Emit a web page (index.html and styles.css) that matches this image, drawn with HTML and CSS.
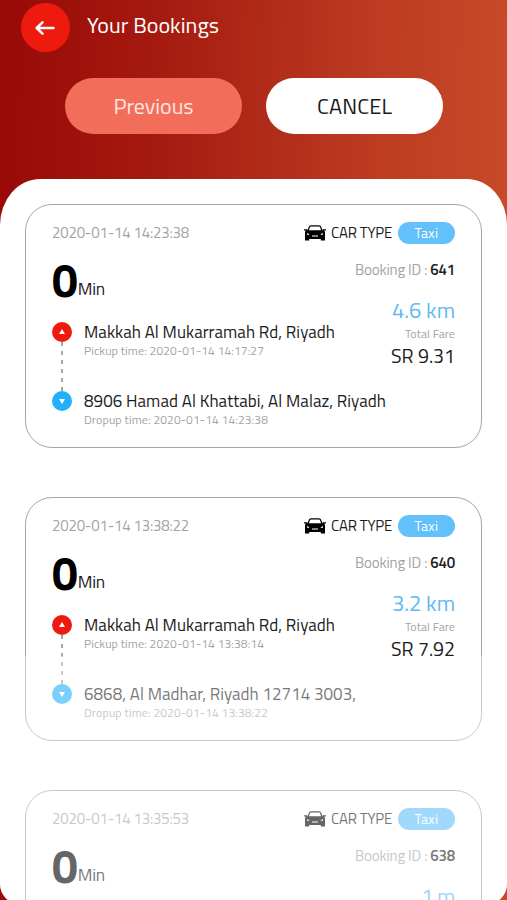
FILE: index.html
```html
<!DOCTYPE html>
<html lang="en">
<head>
    <meta charset="UTF-8">
    <meta name="viewport" content="width=device-width, initial-scale=1.0">
    <title>Your Bookings</title>
    <link rel="stylesheet" href="styles.css">
</head>
<body>
    <svg class="defs" width="0" height="0">
        <symbol id="car" viewBox="0 0 22 16">
            <path d="M4 6 L5.2 2.4 Q5.6 0.9 7.2 0.9 H14.8 Q16.4 0.9 16.8 2.4 L18 6" fill="none" stroke="currentColor" stroke-width="1.3"/>
            <path fill-rule="evenodd" d="M0 4.2 H3.4 V5.2 H18.6 V4.2 H22 V5.4 H20.2 Q21 6.2 21 7.5 V15.6 H16.8 V14 H5.2 V15.6 H1 V7.5 Q1 6.2 1.8 5.4 H0 Z M3 8 V9.6 Q4 10.2 5.6 9.6 Z M19 8 V9.6 Q18 10.2 16.4 9.6 Z M8 10.6 V11.6 H14 V10.6 Z" fill="currentColor"/>
        </symbol>
    </svg>

    <div class="screen">
        <header class="header">
            <button class="back" type="button" aria-label="Back">
                <svg width="20" height="16" viewBox="0 0 20 16" fill="none" stroke="#fff" stroke-width="2.5" stroke-linecap="round" stroke-linejoin="round">
                    <path d="M18.5 8 H2 M7.5 2.3 L1.7 8 L7.5 13.7"/>
                </svg>
            </button>
            <h1 class="title"><span class="fit" data-w="132">Your Bookings</span></h1>
        </header>

        <div class="tabs">
            <button class="tab tab-previous" type="button"><span class="fit" data-w="80">Previous</span></button>
            <button class="tab tab-cancel" type="button"><span class="fit" data-w="75">CANCEL</span></button>
        </div>

        <main class="sheet">
            <div class="card">
                <div class="card-top">
                    <span class="date fit" data-w="137">2020-01-14 14:23:38</span>
                    <svg class="car"><use href="#car"/></svg>
                    <span class="car-type fit" data-w="61">CAR TYPE</span>
                    <span class="badge"><span class="fit" data-w="24">Taxi</span></span>
                </div>
                <div class="card-body">
                    <div class="trip">
                        <div class="duration"><b>0</b><span class="fit" data-w="27">Min</span></div>
                        <div class="stop">
                            <i class="dot dot-up"></i>
                            <div>
                                <p class="place"><span class="fit" data-w="251">Makkah Al Mukarramah Rd, Riyadh</span></p>
                                <p class="time"><span class="fit" data-w="180">Pickup time: 2020-01-14 14:17:27</span></p>
                            </div>
                        </div>
                        <div class="stop">
                            <i class="dot dot-down"></i>
                            <div>
                                <p class="place"><span class="fit" data-w="302">8906 Hamad Al Khattabi, Al Malaz, Riyadh</span></p>
                                <p class="time"><span class="fit" data-w="184">Dropup time: 2020-01-14 14:23:38</span></p>
                            </div>
                        </div>
                    </div>
                    <div class="fare">
                        <p class="booking"><span class="fit" data-w="100">Booking ID : <b>641</b></span></p>
                        <p class="distance"><span class="fit" data-w="63">4.6 km</span></p>
                        <p class="fare-label"><span class="fit" data-w="50">Total Fare</span></p>
                        <p class="price"><span class="fit" data-w="64">SR 9.31</span></p>
                    </div>
                </div>
            </div>

            <div class="card">
                <div class="card-top">
                    <span class="date fit" data-w="137">2020-01-14 13:38:22</span>
                    <svg class="car"><use href="#car"/></svg>
                    <span class="car-type fit" data-w="61">CAR TYPE</span>
                    <span class="badge"><span class="fit" data-w="24">Taxi</span></span>
                </div>
                <div class="card-body">
                    <div class="trip">
                        <div class="duration"><b>0</b><span class="fit" data-w="27">Min</span></div>
                        <div class="stop">
                            <i class="dot dot-up"></i>
                            <div>
                                <p class="place"><span class="fit" data-w="251">Makkah Al Mukarramah Rd, Riyadh</span></p>
                                <p class="time"><span class="fit" data-w="180">Pickup time: 2020-01-14 13:38:14</span></p>
                            </div>
                        </div>
                        <div class="stop">
                            <i class="dot dot-down"></i>
                            <div>
                                <p class="place"><span class="fit" data-w="272">6868, Al Madhar, Riyadh 12714 3003,</span></p>
                                <p class="time"><span class="fit" data-w="184">Dropup time: 2020-01-14 13:38:22</span></p>
                            </div>
                        </div>
                    </div>
                    <div class="fare">
                        <p class="booking"><span class="fit" data-w="100">Booking ID : <b>640</b></span></p>
                        <p class="distance"><span class="fit" data-w="63">3.2 km</span></p>
                        <p class="fare-label"><span class="fit" data-w="50">Total Fare</span></p>
                        <p class="price"><span class="fit" data-w="64">SR 7.92</span></p>
                    </div>
                </div>
            </div>

            <div class="card">
                <div class="card-top">
                    <span class="date fit" data-w="137">2020-01-14 13:35:53</span>
                    <svg class="car"><use href="#car"/></svg>
                    <span class="car-type fit" data-w="61">CAR TYPE</span>
                    <span class="badge"><span class="fit" data-w="24">Taxi</span></span>
                </div>
                <div class="card-body">
                    <div class="trip">
                        <div class="duration"><b>0</b><span class="fit" data-w="27">Min</span></div>
                    </div>
                    <div class="fare">
                        <p class="booking"><span class="fit" data-w="100">Booking ID : <b>638</b></span></p>
                        <p class="distance"><span class="fit" data-w="34">1 m</span></p>
                    </div>
                </div>
            </div>
            <div class="fade"></div>
        </main>
    </div>

    <script src="script.js"></script>
</body>
</html>
```
FILE: styles.css
```css
* {
    box-sizing: border-box;
}
body {
    margin: 0;
    font-family: "Titillium Web", "Noto Sans", sans-serif;
    color: #1c1c1c;
}
p, h1 {
    margin: 0;
    font-weight: 400;
}
button {
    border: none;
    padding: 0;
    font-family: inherit;
}
.defs {
    position: absolute;
}
.fit {
    white-space: nowrap;
}
.screen {
    height: 900px;
    overflow: hidden;
    display: flex;
    flex-direction: column;
    background: linear-gradient(91deg, #990a07 1%, #a51a10 30%, #b02a19 50%, #bd3c22 73%, #c64928 97%);
}
.header {
    display: flex;
    gap: 17px;
    padding: 3px 0 0 21px;
}
.back {
    width: 49px;
    height: 49px;
    padding-right: 2px;
    border-radius: 50%;
    background: #ef1a0e;
    display: flex;
    align-items: center;
    justify-content: center;
}
.title {
    font-size: 22px;
    line-height: 45px;
    color: #fff;
}
.tabs {
    display: flex;
    gap: 24px;
    padding: 26px 0 0 65px;
}
.tab {
    width: 177px;
    height: 56px;
    border-radius: 28px;
    font-size: 22px;
    line-height: 55px;
}
.tab-previous {
    background: #f36e5a;
    color: #ffe5df;
}
.tab-cancel {
    background: #fff;
    color: #1c1c1c;
}
.sheet {
    position: relative;
    flex: none;
    height: 725px;
    margin-top: 45px;
    padding: 25px 25px 0;
    border-radius: 40px 40px 20px 20px / 46px 46px 20px 20px;
    background: #fff;
    overflow: hidden;
}
.card {
    height: 244px;
    margin-bottom: 49px;
    padding: 17px 26px 0;
    border: 1.5px solid #a6a6a6;
    border-radius: 27px;
}
.card-top {
    display: flex;
    align-items: center;
    height: 22px;
    font-size: 15px;
    line-height: 22px;
}
.date {
    color: #a3a3a3;
    margin-right: auto;
}
.car {
    width: 22px;
    height: 16px;
    margin-right: 5px;
    color: #000;
}
.badge {
    width: 57px;
    height: 22px;
    margin-left: 6px;
    border-radius: 11px;
    background: #62c0fb;
    color: #fff;
    text-align: center;
    font-size: 14px;
}
.card-body {
    display: flex;
    justify-content: space-between;
}
.trip {
    width: 0;
}
.duration {
    display: flex;
    align-items: flex-start;
    height: 78px;
    line-height: 89px;
    font-size: 17.5px;
}
.duration b {
    width: 26px;
    font-size: 46px;
    line-height: 73px;
    color: #000;
}
.stop {
    display: flex;
    gap: 12px;
    height: 68.5px;
}
.dot {
    position: relative;
    flex: none;
    width: 20px;
    height: 20px;
    border-radius: 50%;
}
.dot-up {
    background: #ef1a0e;
}
.dot-down {
    background: #22b0fc;
}
.dot::before {
    content: "";
    position: absolute;
    left: 7px;
    top: 7px;
    border: 3px solid transparent;
}
.dot-up::before {
    border-top-width: 0;
    border-bottom: 5px solid #fff;
}
.dot-down::before {
    top: 8px;
    border-bottom-width: 0;
    border-top: 5px solid #fff;
}
/* dashed line down to the drop-off */
.dot-up::after {
    content: "";
    position: absolute;
    left: 9px;
    top: 20px;
    width: 2px;
    height: 49px;
    background: repeating-linear-gradient(#a6a6a6 0 4px, transparent 4px 9px);
}
.place {
    height: 21px;
    font-size: 17px;
    line-height: 21px;
}
.time {
    font-size: 12px;
    line-height: 15px;
    color: #a3a3a3;
}
.fare {
    display: flex;
    flex-direction: column;
    align-items: flex-end;
    white-space: nowrap;
}
.booking {
    margin-top: 14px;
    font-size: 15px;
    line-height: 24px;
    color: #a3a3a3;
}
.booking b {
    font-weight: 600;
    color: #222;
}
.distance {
    margin-top: 13px;
    font-size: 22px;
    line-height: 30px;
    color: #62b9f3;
}
.fare-label {
    font-size: 12px;
    line-height: 18px;
    color: #a3a3a3;
}
.price {
    font-size: 19.5px;
    line-height: 27px;
}
/* white veil over the end of the list */
.fade {
    position: absolute;
    left: 0;
    right: 0;
    top: 477px;
    bottom: 0;
    background: rgba(255, 255, 255, 0.4);
}
```
FILE: script.js
```js
// tighten or loosen the tracking so each label fills its width
document.querySelectorAll(".fit").forEach(function (el) {
    const width = el.getBoundingClientRect().width;
    const count = el.textContent.length;
    const spacing = (Number(el.dataset.w) - width) / count;
    el.style.letterSpacing = spacing.toFixed(3) + "px";
});
```
